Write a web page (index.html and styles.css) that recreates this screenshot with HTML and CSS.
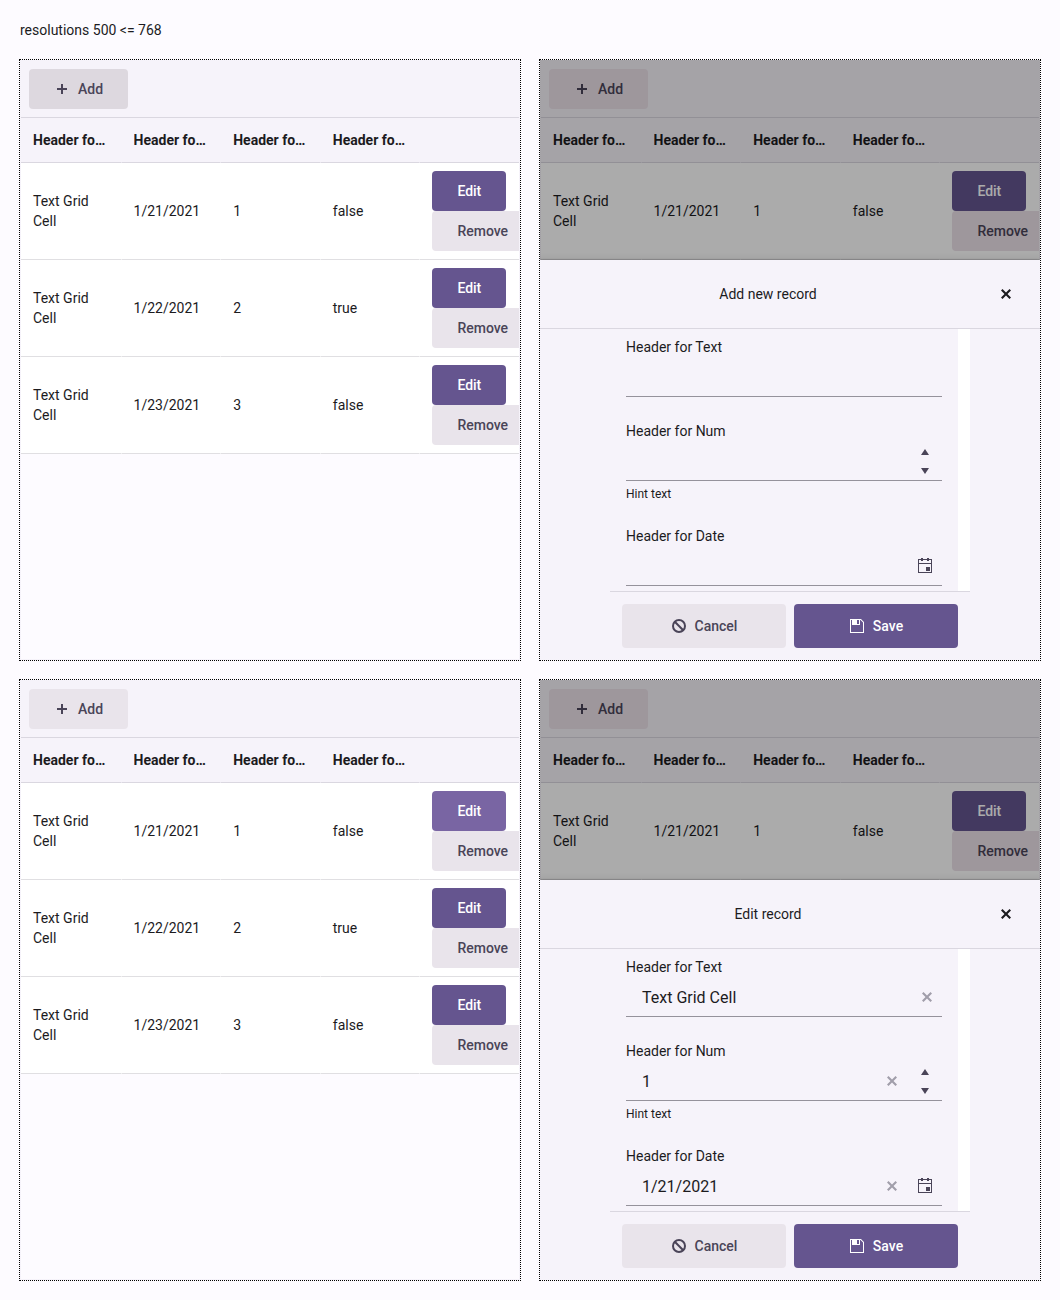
FILE: index.html
```
<!DOCTYPE html>
<html lang="en">
<head>
<meta charset="utf-8">
<title>Data grid</title>
<link rel="stylesheet" href="styles.css">
</head>
<body>
<svg class="sprite" aria-hidden="true">
  <symbol id="plus" viewBox="0 0 16 16"><path d="M7 3h2v4h4v2H9v4H7V9H3V7h4z"/></symbol>
  <symbol id="close" viewBox="0 0 16 16"><path d="M13 4.500 9.500 8l3.500 3.500-1.500 1.500L8 9.500 4.500 13 3 11.500 6.500 8 3 4.500 4.500 3 8 6.500 11.500 3z"/></symbol>
  <symbol id="cancel" viewBox="0 0 16 16"><circle cx="8" cy="8" r="6" fill="none" stroke="currentColor" stroke-width="2"/><path d="M3.8 3.8l8.4 8.4" stroke="currentColor" stroke-width="2"/></symbol>
  <symbol id="save" viewBox="0 0 16 16"><path fill-rule="evenodd" d="M1 1h11l3 3v11H1zM2 2v12h12V4.500L11.500 2H11v5H3V2zM8 2v4h2V2z"/></symbol>
  <symbol id="calendar" viewBox="0 0 16 16"><path fill-rule="evenodd" d="M4 0h2v1h4V0h2v1h3v14H1V1h3zM2 2v3h12V2h-2v1h-2V2H6v1H4V2zM2 6v8h12V6zM9 9h4v4H9z"/></symbol>
  <symbol id="up" viewBox="0 0 8 6"><path d="M4 0l4 6H0z"/></symbol>
  <symbol id="down" viewBox="0 0 8 6"><path d="M0 0h8L4 6z"/></symbol>
</svg>
<div class="title">resolutions 500 &lt;= 768</div>
<main class="panels" id="panels"></main>

<template id="grid-template">
  <div class="grid">
    <div class="toolbar"><button class="btn"><svg class="icon"><use href="#plus"/></svg>Add</button></div>
    <div class="row head">
      <div class="cell"><span>Header for Text</span></div><div class="cell"><span>Header for Date</span></div><div class="cell"><span>Header for Num</span></div><div class="cell"><span>Header for Bool</span></div><div class="cell"></div>
    </div>
    <div class="rows"></div>
  </div>
</template>

<template id="dialog-template">
  <div class="overlay"></div>
  <section class="sheet">
    <header class="sheet-head"><span class="sheet-title"></span><svg class="icon close"><use href="#close"/></svg></header>
    <div class="form">
      <div class="field"><label>Header for Text</label><div class="input"><span class="value"></span></div></div>
      <div class="field"><label>Header for Num</label><div class="input"><span class="value"></span><span class="spin"><svg><use href="#up"/></svg><svg><use href="#down"/></svg></span></div><div class="hint">Hint text</div></div>
      <div class="field"><label>Header for Date</label><div class="input"><span class="value"></span><span class="picker"><svg class="icon"><use href="#calendar"/></svg></span></div></div>
    </div>
    <footer class="actions"><button class="btn"><svg class="icon"><use href="#cancel"/></svg>Cancel</button><button class="btn primary"><svg class="icon"><use href="#save"/></svg>Save</button></footer>
  </section>
</template>
<script src="grid.js"></script>
</body>
</html>
```
FILE: styles.css
```
* { box-sizing: border-box; }
body {
  margin: 0;
  padding: 20px;
  background: #fdfbff;
  color: #1c1b1e;
  font: 14px/20px Roboto, sans-serif;
}
.sprite { display: none; }
svg { display: block; flex: none; fill: currentColor; }
.icon { width: 16px; height: 16px; }
.title { height: 40px; }
.panels {
  display: grid;
  grid-template-columns: 500px 500px;
  grid-auto-rows: 600px;
  gap: 20px;
}
.panel { position: relative; outline: 1px dotted #000; overflow: hidden; }
.grid { height: 600px; border: 1px solid #f6f3fa; overflow: hidden; }
.toolbar {
  height: 57px;
  padding: 8px;
  background: #f6f3fa;
  border-bottom: 1px solid #dad7e0;
}
.btn {
  display: flex;
  align-items: center;
  justify-content: center;
  gap: 8px;
  height: 40px;
  padding: 0 25px;
  border: 0;
  border-radius: 4px;
  background: #e9e4eb;
  color: #4a4458;
  font: 500 14px/20px Roboto, sans-serif;
}
.toolbar .btn { width: 99px; }
.covered .grid .btn { background: #ece1e9; }
.panel .btn.primary { background: #65558f; color: #fff; }
.hover-add .toolbar .btn { background: #ddd8df; }
.hover-edit .row:first-child .btn.primary { background: #7965a3; }
.row { display: grid; grid-template-columns: repeat(5, 99.6px); height: 97px; background: #fff; }
.head { height: 45px; background: #f6f3fa; font-weight: 700; }
.cell {
  display: flex;
  flex-direction: column;
  justify-content: center;
  align-items: flex-start;
  padding: 8px 12px;
  border-left: 1px solid transparent;
  border-bottom: 1px solid #e0dfe2;
  min-width: 0;
}
.cell:first-child { border-left: 0; }
.head .cell { border-bottom-color: #dad7e0; }
.head span { width: 100%; overflow: hidden; white-space: nowrap; text-overflow: ellipsis; }
.overlay { position: absolute; inset: 0; background: rgba(0, 0, 0, .33); }
.sheet {
  position: absolute;
  inset: 200px 0 0;
  display: flex;
  flex-direction: column;
  background: #f6f3fa;
  box-shadow: 0 1px 3px rgba(0, 0, 0, .3), 0 4px 8px 3px rgba(0, 0, 0, .15);
}
.sheet-head {
  display: flex;
  align-items: center;
  gap: 2px;
  height: 69px;
  padding-right: 26px;
  border-bottom: 1px solid #dad7e0;
}
.sheet-title { flex: 1; text-align: center; }
.form {
  align-self: center;
  flex: 0 0 262px;
  width: 360px;
  padding: 8px 16px 0;
  border-right: 12px solid #fff;
  overflow: hidden;
  display: flex;
  flex-direction: column;
  gap: 24px;
}
.field label { display: block; }
.input {
  display: flex;
  align-items: center;
  height: 40px;
  padding-left: 16px;
  border-bottom: 1px solid #95929b;
  font-size: 16px;
  line-height: 24px;
}
.value { flex: 1; padding-top: 2px; }
.clear { color: #a19eaa; margin-right: 7px; }
.clear:not(:last-child) { margin-right: 8px; }
.spin, .picker { width: 34px; display: flex; flex-direction: column; align-items: center; color: #4a4458; }
.spin { gap: 13px; padding-top: 2px; }
.spin svg { width: 8px; height: 6px; }
.hint { padding-top: 5px; font-size: 12px; line-height: 16px; }
.actions {
  align-self: center;
  width: 360px;
  height: 69px;
  padding: 12px;
  border-top: 1px solid #dad7e0;
  display: flex;
  gap: 8px;
}
.actions .btn { width: 164px; height: 44px; }
```
FILE: grid.js
```
const panels = [
  { state: 'hover-add' },
  { state: 'covered', title: 'Add new record', values: ['', '', ''] },
  { state: 'hover-edit' },
  { state: 'covered', title: 'Edit record', values: ['Text Grid Cell', '1', '1/21/2021'] }
];
const records = [['1/21/2021', 1, false], ['1/22/2021', 2, true], ['1/23/2021', 3, false]];
const rowMarkup = ([date, num, flag]) => `<div class="row"><div class="cell">Text Grid Cell</div><div class="cell">${date}</div><div class="cell">${num}</div><div class="cell">${flag}</div><div class="cell"><button class="btn primary">Edit</button><button class="btn">Remove</button></div></div>`;

for (const config of panels) {
  const panel = document.createElement('div');
  panel.className = 'panel ' + config.state;
  panel.append(document.getElementById('grid-template').content.cloneNode(true));
  panel.querySelector('.rows').innerHTML = records.map(rowMarkup).join('');
  if (config.title) {
    panel.append(document.getElementById('dialog-template').content.cloneNode(true));
    panel.querySelector('.sheet-title').textContent = config.title;
    panel.querySelectorAll('.value').forEach((node, i) => {
      node.textContent = config.values[i];
      if (config.values[i]) node.insertAdjacentHTML('afterend', '<svg class="icon clear"><use href="#close"/></svg>');
    });
  }
  document.getElementById('panels').append(panel);
}
```
